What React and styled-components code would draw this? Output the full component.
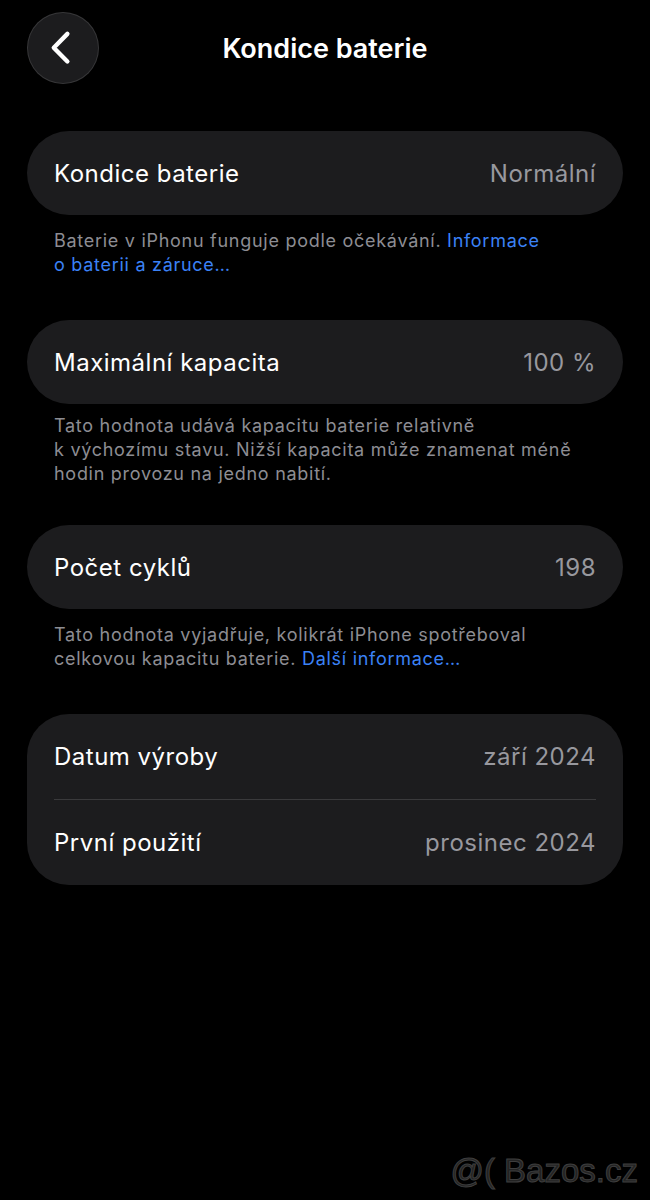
import React from "react";
import styled, { createGlobalStyle } from "styled-components";

const GlobalStyle = createGlobalStyle`
  html, body {
    margin: 0;
    padding: 0;
    background: #000;
  }
  body {
    font-family: Inter, "Noto Sans", "Liberation Sans", sans-serif;
    -webkit-font-smoothing: antialiased;
  }
`;

const Screen = styled.div`
  position: relative;
  width: 650px;
  height: 1200px;
  background: #000;
  color: #fff;
  overflow: hidden;
`;

const Header = styled.div`
  position: relative;
  display: flex;
  align-items: center;
  justify-content: center;
  height: 72px;
  padding: 12px 27px 0;
  margin-bottom: 47px;
`;

const BackButton = styled.button`
  position: absolute;
  left: 27px;
  top: 12px;
  width: 72px;
  height: 72px;
  border-radius: 50%;
  background: #1c1c1e;
  border: 1px solid rgba(255, 255, 255, 0.12);
  display: flex;
  align-items: center;
  justify-content: center;
  padding: 0;
`;

const Title = styled.h1`
  margin: 0;
  font-size: 27px;
  font-weight: 600;
  color: #fff;
`;

const Section = styled.section`
  margin-bottom: ${(p) => (p.$tight ? "39px" : "43px")};
`;

const Card = styled.div`
  margin: 0 27px;
  background: #1c1c1e;
  border-radius: 42px;
  padding: 0 27px;
`;

const Row = styled.div`
  display: flex;
  align-items: center;
  justify-content: space-between;
  height: ${(p) => (p.$tall ? "85px" : "84px")};
  border-bottom: ${(p) => (p.$divider ? "1px solid #3a3a3c" : "none")};
`;

const Label = styled.span`
  font-size: 24px;
  color: #fff;
  letter-spacing: 0.5px;
`;

const Value = styled.span`
  font-size: 24px;
  color: #98989e;
  letter-spacing: 0.5px;
`;

const Footnote = styled.p`
  margin: 0;
  padding: ${(p) => (p.$tight ? "10px" : "14px")} 40px 0 54px;
  font-size: 18px;
  line-height: 24px;
  color: #8d8d93;
  letter-spacing: 0.72px;
`;

const Link = styled.span`
  color: #3b82f6;
`;

const Watermark = styled.div`
  position: absolute;
  right: 12px;
  bottom: 10px;
  font-family: "Liberation Sans", Arial, sans-serif;
  font-size: 33px;
  color: #232323;
  -webkit-text-stroke: 1px #3e3e3e;
  white-space: pre;
`;

function Chevron() {
  return (
    <svg width="72" height="72" viewBox="0 0 72 72" fill="none">
      <path
        d="M40.5 21.5 L26.5 35.7 L40.5 49.8"
        stroke="#fff"
        strokeWidth="4.5"
        strokeLinecap="round"
        strokeLinejoin="round"
      />
    </svg>
  );
}

export default function App() {
  return (
    <Screen>
      <GlobalStyle />
      <Header>
        <BackButton aria-label="Zpět">
          <Chevron />
        </BackButton>
        <Title>Kondice baterie</Title>
      </Header>

      <Section>
        <Card>
          <Row>
            <Label>Kondice baterie</Label>
            <Value>Normální</Value>
          </Row>
        </Card>
        <Footnote>
          Baterie v iPhonu funguje podle očekávání. <Link>Informace</Link>
          <br />
          <Link>o baterii a záruce…</Link>
        </Footnote>
      </Section>

      <Section $tight>
        <Card>
          <Row>
            <Label>Maximální kapacita</Label>
            <Value>100 %</Value>
          </Row>
        </Card>
        <Footnote $tight>
          Tato hodnota udává kapacitu baterie relativně
          <br />
          k výchozímu stavu. Nižší kapacita může znamenat méně
          <br />
          hodin provozu na jedno nabití.
        </Footnote>
      </Section>

      <Section>
        <Card>
          <Row>
            <Label>Počet cyklů</Label>
            <Value>198</Value>
          </Row>
        </Card>
        <Footnote>
          Tato hodnota vyjadřuje, kolikrát iPhone spotřeboval
          <br />
          celkovou kapacitu baterie. <Link>Další informace…</Link>
        </Footnote>
      </Section>

      <Section>
        <Card>
          <Row $tall $divider>
            <Label>Datum výroby</Label>
            <Value>září 2024</Value>
          </Row>
          <Row $tall>
            <Label>První použití</Label>
            <Value>prosinec 2024</Value>
          </Row>
        </Card>
      </Section>

      <Watermark>{"@( Bazos.cz"}</Watermark>
    </Screen>
  );
}
